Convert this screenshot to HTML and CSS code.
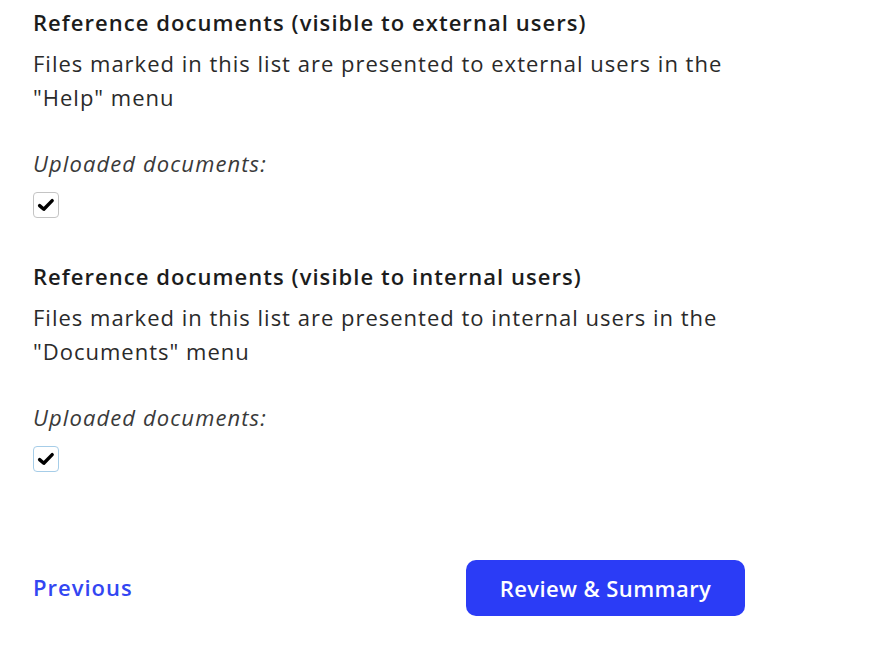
FILE: index.html
```html
<!DOCTYPE html>
<html lang="en">
<head>
<meta charset="utf-8">
<title>Reference documents</title>
<link rel="stylesheet" href="styles.css">
</head>
<body>
<main class="page">
  <section class="group">
    <h2 class="group-title">Reference documents (visible to external users)</h2>
    <p class="group-desc">Files marked in this list are presented to external users in the "Help" menu</p>
    <div class="uploads">
      <p class="uploads-label">Uploaded documents:</p>
      <label class="check">
        <input type="checkbox" class="check-input" checked>
        <span class="check-box"><svg viewBox="0 0 18 18" width="18" height="18"><path d="M2.6 9.6 L6.8 13.2 L15.2 4.6" fill="none" stroke="#000" stroke-width="3.4" stroke-linecap="round" stroke-linejoin="round"/></svg></span>
      </label>
    </div>
  </section>
  <section class="group">
    <h2 class="group-title">Reference documents (visible to internal users)</h2>
    <p class="group-desc">Files marked in this list are presented to internal users in the "Documents" menu</p>
    <div class="uploads">
      <p class="uploads-label">Uploaded documents:</p>
      <label class="check">
        <input type="checkbox" class="check-input" checked>
        <span class="check-box check-box-focus"><svg viewBox="0 0 18 18" width="18" height="18"><path d="M2.6 9.6 L6.8 13.2 L15.2 4.6" fill="none" stroke="#000" stroke-width="3.4" stroke-linecap="round" stroke-linejoin="round"/></svg></span>
      </label>
    </div>
  </section>
  <footer class="actions">
    <a class="link-prev" href="#">Previous</a>
    <button class="btn-primary" type="button">Review &amp; Summary</button>
  </footer>
</main>
</body>
</html>
```
FILE: styles.css
```css
html, body {
  margin: 0;
  padding: 0;
  background: #ffffff;
}
body {
  font-family: "Open Sans", "Noto Sans", sans-serif;
  color: #222222;
}
.page {
  width: 712px;
  padding: 5px 0 0 33px;
}
.group {
  display: flex;
  flex-direction: column;
}
.group + .group {
  margin-top: 41px;
}
.group-title {
  margin: 0;
  font-size: 22px;
  font-weight: 600;
  line-height: 34px;
  letter-spacing: 1.05px;
  color: #1c1c1c;
}
.group-desc {
  margin: 7px 0 0;
  font-size: 22px;
  line-height: 34px;
  letter-spacing: 1px;
  color: #2a2a2a;
  max-width: 712px;
}
.uploads {
  margin-top: 32px;
  display: flex;
  flex-direction: column;
  align-items: flex-start;
  gap: 12px;
}
.uploads-label {
  margin: 0;
  font-size: 22px;
  line-height: 34px;
  letter-spacing: 1.1px;
  font-style: italic;
  color: #3a3a3a;
}
.check {
  display: inline-flex;
  position: relative;
}
.check-input {
  position: absolute;
  opacity: 0;
  margin: 0;
  width: 1px;
  height: 1px;
}
.check-box {
  width: 26px;
  height: 26px;
  box-sizing: border-box;
  border: 1.5px solid #c4c4c4;
  border-radius: 4px;
  display: flex;
  align-items: center;
  justify-content: center;
  background: #fff;
}
.check-box-focus {
  border-color: #a6cde8;
}
.actions {
  margin-top: 88px;
  display: flex;
  justify-content: space-between;
  align-items: center;
}
.link-prev {
  font-size: 22px;
  font-weight: 600;
  letter-spacing: 1px;
  color: #3346f2;
  text-decoration: none;
  margin-top: -3px;
}
.btn-primary {
  width: 279px;
  height: 56px;
  border: none;
  border-radius: 10px;
  background: #2b3cf6;
  color: #ffffff;
  font-family: "Open Sans", "Noto Sans", sans-serif;
  font-size: 22px;
  font-weight: 600;
  letter-spacing: 0.4px;
  cursor: pointer;
}
```
